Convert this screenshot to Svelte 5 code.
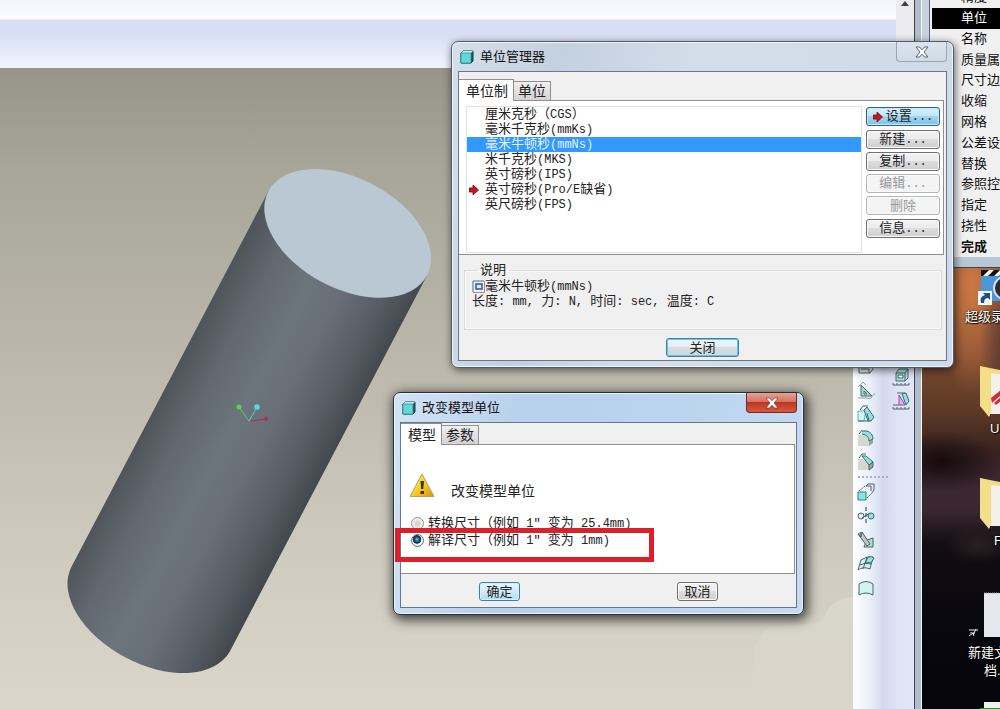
<script lang="ts">
  type Shape = { d: string; fill?: string; stroke?: string; dash?: string };
  type ToolIcon = { name: string; shapes: Shape[] };

  const INK = '#4a6468';
  const CYAN = '#8ce4e4';
  const PALE = '#d3f3f3';

  const unitSystems = [
    { name: '厘米克秒（CGS）' },
    { name: '毫米千克秒(mmKs)' },
    { name: '毫米牛顿秒(mmNs)' },
    { name: '米千克秒(MKS)' },
    { name: '英寸磅秒(IPS)' },
    { name: '英寸磅秒(Pro/E缺省)', current: true },
    { name: '英尺磅秒(FPS)' },
  ];

  const actions = [
    [{ label: '设置...', primary: true }],
    [
      { label: '新建...' },
      { label: '复制...' },
      { label: '编辑...', disabled: true },
      { label: '删除', disabled: true },
    ],
    [{ label: '信息...' }],
  ];

  const menuItems = [
    '精度', '单位', '名称', '质量属', '尺寸边', '收缩', '网格',
    '公差设', '替换', '参照控', '指定', '挠性', '完成',
  ];

  const modes = [
    { value: 'convert', label: '转换尺寸（例如 1" 变为 25.4mm)' },
    { value: 'interpret', label: '解译尺寸（例如 1" 变为 1mm)' },
  ];

  const shortcuts = [
    { kind: 'recorder', indent: 16, lines: [{ text: '超级录', indent: 3 }] },
    { kind: 'folder-red', indent: 18, lines: [{ text: 'U', indent: 28 }] },
    { kind: 'folder', indent: 18, lines: [{ text: 'F', indent: 32 }] },
    { kind: 'doc', indent: 6, lines: [{ text: '新建文', indent: 6 }, { text: '档.', indent: 22 }] },
    { kind: 'green', indent: 18, lines: [] },
  ];

  const editTools: ToolIcon[] = [
    {
      name: '壳',
      shapes: [
        { d: 'M2 10h10l4-4v6l-3 4H2z', fill: '#e3e6e6' },
        { d: 'M4 12h8v4' },
      ],
    },
    {
      name: '筋',
      shapes: [
        { d: 'M4 4v11h11z', fill: '#a9d8cb' },
        { d: 'M7 10v3h3z', fill: '#eef8f6' },
        { d: 'M1 6l5-5 3 3M1 17h9l3 1 5-6', stroke: '#8ba3a5' },
      ],
    },
    {
      name: '拔模',
      shapes: [
        { d: 'M1 6h8l-2 10H1z', fill: PALE, stroke: '#5cb5b5' },
        { d: 'M10 2l7 10-3 4h-3L7 5z', fill: CYAN },
        { d: 'M3 5l3-4h5M1 16h11l-2-8' },
      ],
    },
    {
      name: '倒圆角',
      shapes: [
        { d: 'M1 6h5q7 2 7 11H1z', fill: '#d4d8ce', stroke: 'none' },
        { d: 'M12 11l4-2v5l-4 3z', fill: '#9ca5a1', stroke: 'none' },
        { d: 'M5 2h5q6 2 6 8l-4 2q0-6-7-7', fill: CYAN },
        { d: 'M2 5l3-4' },
      ],
    },
    {
      name: '倒角',
      shapes: [
        { d: 'M1 6h5l6 6v5H1z', fill: '#d4d8ce', stroke: 'none' },
        { d: 'M12 12l4-3v5l-4 3z', fill: '#9ca5a1' },
        { d: 'M5 3h4l7 6-4 3z', fill: CYAN },
        { d: 'M2 5l3-4h4' },
      ],
    },
  ];

  const patternTools: ToolIcon[] = [
    {
      name: '阵列',
      shapes: [
        { d: 'M1 9h8v8H1z', fill: CYAN, stroke: '#2f7f84' },
        { d: 'M9 3l2-2h6v6l-2 3M9 3h5v5' },
        { d: 'M2 8l6-5M10 15l5-5', dash: '2 1' },
      ],
    },
    {
      name: '镜像',
      shapes: [
        { d: 'M1 9a3 3 0 1 0 6 0a3 3 0 1 0-6 0', fill: '#e3f8f8' },
        { d: 'M11 9a3 3 0 1 0 6 0a3 3 0 1 0-6 0', fill: CYAN },
        { d: 'M5 11l8-5' },
        { d: 'M9 0v18', dash: '4 2', stroke: '#25383a' },
      ],
    },
    {
      name: '合并',
      shapes: [
        { d: 'M5 2l5 7 6-2v9H7l2-5z', fill: '#a9dfd0' },
        { d: 'M1 3l4-2 8 12-3 2z', fill: '#c9c4c6' },
        { d: 'M1 3l3 3 1-5', fill: '#5fa8a0' },
      ],
    },
    {
      name: '边界混合',
      shapes: [
        { d: 'M4 5q5-4 12-3l-3 12q-7-3-12 1z', fill: PALE },
        { d: 'M11 2q4-1 6 1l-3 5q-3-1-6 0z', fill: CYAN },
        { d: 'M3 10q5-3 11-1M10 2L6 14' },
      ],
    },
    {
      name: '填充',
      shapes: [{ d: 'M2 5q7-5 14 0v11q-7-4-14 0z', fill: PALE }],
    },
  ];

  const featureTools: ToolIcon[] = [
    {
      name: '拉伸',
      shapes: [
        { d: 'M4 5l3-4h9v9l-3 3H4z', fill: '#a9dfdf' },
        { d: 'M4 5h9v8M13 5l3-4' },
        { d: 'M6 7h5v3H6z', fill: '#fff' },
        { d: 'M1 15v2h16v-2M5 15v2M9 15v2M13 15v2' },
      ],
    },
    {
      name: '旋转',
      shapes: [
        { d: 'M10 2l4-1 3 8-3 4z', fill: CYAN },
        { d: 'M7 3v10h6z', fill: '#dcb8ee', stroke: '#8b4aa5' },
        { d: 'M1 15v2h16v-2M1 13h6M5 1h8M5 15v2M9 15v2M13 15v2' },
      ],
    },
  ];

  let selected = $state(2);
  let mode = $state('interpret');

  const runs = (text: string) => text.match(/[\x20-\x7e]+|[^\x20-\x7e]+/g) ?? [];
  const isLatin = (run: string) => run.charCodeAt(0) < 0x7f;
</script>

{#snippet mixed(text: string)}
  <span class="mixed">{#each runs(text) as run}<span class:latin={isLatin(run)}>{run}</span>{/each}</span>
{/snippet}

{#snippet arrow()}
  <svg class="arrow" viewBox="0 0 10 10" aria-hidden="true">
    <path d="M0 3h4V0l5.500 5L4 10V7H0z" fill="#c8141e" stroke="#6d1010" stroke-width=".8" />
  </svg>
{/snippet}

{#snippet cube()}
  <svg class="cube" viewBox="0 0 14 14" aria-hidden="true">
    <path d="M1 3l2-2h10v10l-2 2H1z" fill="#255a60" stroke="#173e44" />
    <path d="M1 3l2-2h10l-2 2z" fill="#b5f3f0" />
    <rect x="1" y="3" width="10" height="10" fill="#62d9d8" stroke="#2b7378" stroke-width=".6" />
  </svg>
{/snippet}

{#snippet tools(list: ToolIcon[])}
  {#each list as tool (tool.name)}
    <button class="tool" aria-label={tool.name}>
      <svg viewBox="0 0 18 18">
        {#each tool.shapes as shape}
          <path
            d={shape.d}
            fill={shape.fill ?? 'none'}
            stroke={shape.stroke ?? INK}
            stroke-dasharray={shape.dash}
          />
        {/each}
      </svg>
    </button>
  {/each}
{/snippet}

<div class="screen">
  <main class="cad">
    <header class="ribbon">
      <div class="ribbon-bar"></div>
      <div class="scroll">
        <svg viewBox="0 0 8 5"><path d="M0 5l4-5 4 5z" fill="#3c4048" /></svg>
      </div>
    </header>

    <div class="work">
      <div class="canvas">
        <svg viewBox="0 68 853 641" preserveAspectRatio="xMinYMin slice" aria-hidden="true">
          <defs>
            <linearGradient id="side" gradientUnits="userSpaceOnUse" x1="71" y1="567" x2="230" y2="652">
              <stop offset="0" stop-color="#4f555b" />
              <stop offset=".2" stop-color="#626970" />
              <stop offset=".42" stop-color="#6c747c" />
              <stop offset=".6" stop-color="#686f77" />
              <stop offset=".82" stop-color="#565d64" />
              <stop offset="1" stop-color="#41474c" />
            </linearGradient>
            <linearGradient id="patch" x2="0" y2="1">
              <stop offset="0" stop-color="#dbd8cc" stop-opacity=".9" />
              <stop offset="1" stop-color="#dbd8cc" stop-opacity="0" />
            </linearGradient>
          </defs>
          <path
            d="M853 597q-22 1-30 22q-3 5-26 5l-28 4q-14 8-16 30v51h100z"
            fill="url(#patch)"
          />
          <path
            d="M268.400 191.300L71.100 567.500A89.800 55.100 28 0 0 229.700 651.700L427 275.500z"
            fill="url(#side)"
          />
          <ellipse cx="347.700" cy="233.400" rx="89.800" ry="55.100" transform="rotate(28 347.700 233.400)" fill="#b9c8d3" />
          <path d="M249 421l-10-14" stroke="#5fc765" />
          <path d="M249 421l8-14" stroke="#5fc9c4" />
          <path d="M251 421l15-2" stroke="#a8324a" />
          <circle cx="239" cy="407" r="2.500" fill="#55d848" />
          <circle cx="257" cy="407" r="2.800" fill="#4ddbe6" />
          <circle cx="266" cy="419" r="2" fill="#b92c40" />
        </svg>
      </div>

      <aside class="toolbars">
        <div class="toolbar">
          {@render tools(editTools)}
          <hr />
          {@render tools(patternTools)}
        </div>
        <div class="toolbar toolbar--features">
          {@render tools(featureTools)}
        </div>
      </aside>
    </div>
  </main>

  <section class="desktop">
    <nav class="menu">
      {#each menuItems as item, i (item)}
        <button class="menu-item" class:active={i === 1} class:strong={item === '完成'}>{item}</button>
      {/each}
    </nav>

    <div class="shortcuts">
      {#each shortcuts as { kind, indent, lines } (kind)}
        <div class="shortcut">
          <div class="shortcut-icon" style:padding-left="{indent}px">
            {#if kind === 'recorder'}
              <svg width="50" height="38" viewBox="0 0 50 38">
                <path d="M3 0h47v31H3z" fill="#4a97d8" />
                <path d="M3 0h47v6H3z" fill="#111" />
                <path d="M5 6l6-6h5l-6 6zM16 6l6-6h5l-6 6z" fill="#f4f4f4" />
                <circle cx="27" cy="18" r="12" fill="#d7dbe2" />
                <circle cx="27" cy="18" r="10" fill="#2a2b35" />
                <circle cx="27" cy="18" r="3" fill="#c33" />
                <path d="M0 21h14v14H0z" fill="#f5f8fb" />
                <path d="M3 33q-2-6 4-8l-2-2h7v7l-2-2q-4 0-4 5z" fill="#1d4f8f" />
              </svg>
            {:else if kind === 'folder' || kind === 'folder-red'}
              <svg width="50" height="54" viewBox="0 0 50 54">
                <path d="M8 6l42-2v44H8z" fill="#f3f1ea" />
                <path d="M0 0l20 4v4l-9-1v38l-2 6L0 40z" fill="#f1dc83" />
                <path d="M0 0l10 5v45L0 38z" fill="#f3df8a" />
                {#if kind === 'folder-red'}
                  <path d="M11 32l10-8v5l-9 8zM14 37l7-6v4l-5 4z" fill="#cf2f38" />
                {/if}
              </svg>
            {:else if kind === 'doc'}
              <svg width="66" height="54" viewBox="0 0 66 54">
                <path d="M16 3h50v44H16z" fill="#e6e8ef" />
                <path d="M16 3h50" stroke="#999" stroke-dasharray="1 1" />
                <path d="M1 40h9M2 43h5M1 46l4-3 1 3M8 39l-3 6" stroke="#e9e9e9" fill="none" />
              </svg>
            {:else}
              <svg width="50" height="54" viewBox="0 0 50 54">
                <path d="M4 0h46v54H4z" fill="#eef2ec" />
                <path d="M0 6h20v48H0z" fill="#3c8a2e" />
              </svg>
            {/if}
          </div>
          {#each lines as line}
            <span class="shortcut-label" style:padding-left="{line.indent}px">{line.text}</span>
          {/each}
        </div>
      {/each}
    </div>
  </section>

  <section class="dialog dialog--manager" aria-label="单位管理器">
    <header class="title">
      {@render cube()}
      <h2>单位管理器</h2>
      <button class="close" aria-label="关闭窗口">
        <svg viewBox="0 0 14 12">
          <path d="M1 1h3.500L7 3.800 9.500 1H13L9 6l4 5H9.500L7 8.200 4.500 11H1l4-5z" fill="#fff" stroke="#5a6270" />
        </svg>
      </button>
    </header>
    <div class="body">
      <div class="tabs" role="tablist">
        <button class="tab tab--active" role="tab" aria-selected="true">单位制</button>
        <button class="tab" role="tab" aria-selected="false">单位</button>
      </div>
      <div class="pane pane--systems">
        <ul class="systems" role="listbox" aria-label="单位制">
          {#each unitSystems as system, i (system.name)}
            <li role="option" aria-selected={i === selected}>
              <button class:selected={i === selected} onclick={() => (selected = i)}>
                <span class="marker">{#if system.current}{@render arrow()}{/if}</span>
                {@render mixed(system.name)}
              </button>
            </li>
          {/each}
        </ul>
        <div class="actions">
          {#each actions as group}
            <div class="group">
              {#each group as action (action.label)}
                <button class="push" class:push--primary={action.primary} disabled={action.disabled}>
                  {#if action.primary}{@render arrow()}{/if}
                  {@render mixed(action.label)}
                </button>
              {/each}
            </div>
          {/each}
        </div>
      </div>
      <fieldset class="description">
        <legend>说明</legend>
        <p>
          <svg class="glyph" viewBox="0 0 13 13">
            <path d="M1 12V1h11" fill="none" stroke="#44709b" />
            <path d="M1 12.500h11.500V1" fill="none" stroke="#c98080" />
            <path d="M4 4h6v5H4z" fill="#dfeaf6" stroke="#2d5a96" stroke-width="1.500" />
          </svg>{@render mixed('毫米牛顿秒(mmNs)')}
        </p>
        <p>{@render mixed('长度: mm, 力: N, 时间: sec, 温度: C')}</p>
      </fieldset>
      <div class="manager-footer">
        <button class="push push--default">关闭</button>
      </div>
    </div>
  </section>

  <section class="dialog dialog--change" aria-label="改变模型单位">
    <header class="title">
      {@render cube()}
      <h2>改变模型单位</h2>
      <button class="close close--red" aria-label="关闭窗口">
        <svg viewBox="0 0 14 12">
          <path d="M1 1h3.500L7 3.800 9.500 1H13L9 6l4 5H9.500L7 8.200 4.500 11H1l4-5z" fill="#fff" stroke="#7c3a38" stroke-width=".7" />
        </svg>
      </button>
    </header>
    <div class="body">
      <div class="tabs" role="tablist">
        <button class="tab tab--active" role="tab" aria-selected="true">模型</button>
        <button class="tab" role="tab" aria-selected="false">参数</button>
      </div>
      <div class="pane pane--model">
        <div class="notice">
          <svg viewBox="0 0 26 25" aria-hidden="true">
            <defs>
              <linearGradient id="warn" x2="1" y2="1">
                <stop offset="0" stop-color="#fff17a" />
                <stop offset=".5" stop-color="#f8cf2c" />
                <stop offset="1" stop-color="#d89212" />
              </linearGradient>
            </defs>
            <path d="M13 1l12 22.500H1z" fill="url(#warn)" stroke="#b9a25a" stroke-linejoin="round" />
            <path d="M11.500 8h3.500l-.8 8h-2z" fill="#3d3210" />
            <rect x="11.500" y="18" width="3.500" height="3" fill="#3d3210" />
          </svg>
          <span>改变模型单位</span>
        </div>
        {#each modes as option (option.value)}
          <label class="mode">
            <input type="radio" name="mode" value={option.value} bind:group={mode} />
            {@render mixed(option.label)}
          </label>
        {/each}
      </div>
      <div class="change-footer">
        <button class="push push--ok">确定</button>
        <button class="push">取消</button>
      </div>
    </div>
    <div class="highlight"></div>
  </section>
</div>

<style>
  :global(body) {
    overflow: hidden;
  }

  .screen {
    position: relative;
    display: flex;
    height: 100vh;
    overflow: hidden;
    font-family: 'Liberation Sans', 'Noto Sans CJK SC', sans-serif;
    font-size: 13px;
    color: #222;
  }

  .screen * {
    box-sizing: border-box;
  }

  button {
    padding: 0;
    border: 0;
    background: none;
    font: inherit;
    color: inherit;
  }

  svg {
    display: block;
    flex: none;
  }

  .mixed {
    white-space: pre;
  }

  .latin {
    font-family: 'Liberation Mono', monospace;
    font-size: 12px;
  }

  /* CAD window */
  .cad {
    flex: 1;
    min-width: 0;
    display: flex;
    flex-direction: column;
    border-right: 1px solid #f4f6f8;
    box-shadow: inset -6px 0 #b3bdc9, inset -7px 0 #3d4650;
    padding-right: 7px;
  }

  .ribbon {
    display: flex;
    height: 68px;
    flex: none;
  }

  .ribbon-bar {
    flex: 1;
    background: linear-gradient(#f1f4fc 0, #fdfdff 19px, #d8def4 20px, #d9dff5 36px, #edf1fd 62px, #f1f4fd 100%);
  }

  .scroll {
    width: 18px;
    background: #ececee;
  }

  .scroll svg {
    width: 8px;
    margin: 1px auto;
  }

  .work {
    flex: 1;
    min-height: 0;
    display: flex;
  }

  .canvas {
    flex: 1;
    min-width: 0;
    background: linear-gradient(#97958a, #a8a599 16%, #bdbaad 48%, #d0cdc0 78%, #dad7ca);
  }

  .canvas svg {
    width: 100%;
    height: 100%;
  }

  .toolbars {
    width: 61px;
    display: flex;
    justify-content: space-between;
    background: linear-gradient(90deg, #fdfeff, #e9effa 18px, #d5d9ef 30px, #e0e2f6 45px, #e3e5f9);
  }

  .toolbar {
    display: flex;
    flex-direction: column;
    align-items: flex-start;
    padding: 286px 0 0 4px;
  }

  .toolbar--features {
    padding: 297px 4px 0 0;
  }

  .toolbar hr {
    width: 32px;
    height: 6px;
    margin: 0;
    border: 0;
    background: radial-gradient(circle, #a9b1c6 1px, transparent 1px) 0 0 / 4px 6px;
  }

  .tool {
    height: 24px;
  }

  .tool svg {
    width: 18px;
    height: 18px;
  }

  /* Desktop with the menu panel above it */
  .desktop {
    width: 78px;
    display: flex;
    flex-direction: column;
    overflow: hidden;
    background:
      radial-gradient(ellipse 34px 18px at 56px 545px, #2c2022, transparent),
      radial-gradient(ellipse 26px 70px at 84px 345px, #5a3a34, transparent),
      radial-gradient(ellipse 40px 110px at 50px 285px, #cc7a45, transparent),
      radial-gradient(ellipse 60px 30px at 20px 462px, #140b0e, transparent),
      linear-gradient(#8a4e30 0 280px, #7d4a30 350px, #5d3a26 410px, #3a2320 450px, #3b2732 480px, #3a2730 510px, #120d12 545px, #07070d 640px, #06060c);
  }

  /* The list is scrolled up, so its first row is only partly in view */
  .menu {
    position: relative;
    flex: none;
    display: grid;
    grid-template-rows: repeat(13, 1fr);
    height: 281px;
    margin: -13px 0 0 -1px;
    padding: 0 0 10px 8px;
    border-left: 1px solid #4a545f;
    border-bottom: 1px solid #3c444e;
    background: #b9c6d6;
    box-shadow: inset 7px 0 #c9d3df, inset 8px 0 #59626e;
  }

  .menu-item {
    display: flex;
    align-items: center;
    min-height: 0;
    line-height: 20px;
    padding-left: 29px;
    border-left: 2px solid #f0f0f0;
    background: #f0f0f0;
    color: #111;
    white-space: nowrap;
  }

  .menu-item.active {
    background: #000;
    color: #fff;
  }

  .menu-item.strong {
    font-weight: 700;
  }

  .shortcuts {
    flex: 1;
    min-height: 0;
    overflow: hidden;
    display: grid;
    grid-auto-rows: 112px;
    margin-top: -14px;
    padding-left: 40px;
  }

  .shortcut {
    display: flex;
    flex-direction: column;
    color: #fff;
  }

  .shortcut-icon {
    display: flex;
    align-items: flex-end;
    height: 54px;
  }

  .shortcut-label {
    line-height: 18px;
    white-space: nowrap;
    text-shadow: 1px 1px 1px #000, 0 0 2px #000;
  }

  /* Dialogs */
  .dialog {
    position: absolute;
    padding: 0 6px 6px;
    border: 1px solid #4f5c6b;
    border-radius: 7px;
    background: linear-gradient(100deg, #d4dfeb, #c3d0df 20%, #d3deea 45%, #cfdae7);
    box-shadow: inset 0 0 0 1px #eef4fa, 1px 2px 8px rgba(0, 0, 0, 0.6);
  }

  .dialog--manager {
    left: 451px;
    top: 41px;
    width: 503px;
  }

  .dialog--change {
    left: 393px;
    top: 392px;
    width: 411px;
    border-color: #262e36;
    background: linear-gradient(100deg, #d3e3f4, #b7d0ec 30%, #bad3ee 60%, #c4daf1);
    box-shadow: inset 0 0 0 1px #eaf4fd, 2px 3px 12px 2px rgba(0, 0, 0, 0.7);
  }

  .title {
    display: flex;
    align-items: center;
    height: 29px;
    padding-left: 2px;
  }

  .title h2 {
    margin: 0 auto 0 6px;
    font-size: 13px;
    font-weight: 400;
    line-height: 20px;
    color: #111;
  }

  .cube {
    width: 14px;
    height: 14px;
  }

  .close {
    align-self: flex-start;
    display: grid;
    place-items: center;
    width: 51px;
    height: 20px;
    border: 1px solid #98a5b6;
    border-top: 0;
    border-radius: 0 0 4px 4px;
    background: linear-gradient(#dce5ee, #d0dae6);
  }

  .close svg {
    width: 14px;
    height: 12px;
  }

  .close--red {
    border-color: #6d2a28;
    background: linear-gradient(#e5a193, #d2715f 48%, #bc3522 50%, #d9593d);
  }

  .body {
    border: 1px solid #66788a;
    background: #f0f0f0;
  }

  .dialog--manager .body {
    padding-top: 7px;
  }

  .tabs {
    position: relative;
    display: flex;
    align-items: flex-end;
    height: 22px;
    margin-bottom: -1px;
  }

  .tab {
    height: 20px;
    padding: 0 4px;
    border: 1px solid #8e8f91;
    border-left: 0;
    background: linear-gradient(#f0f0f0, #d3d3d3);
    font-size: 14px;
    line-height: 18px;
  }

  .tab--active {
    height: 22px;
    padding: 0 5px 0 7px;
    border-bottom: 0;
    background: #fff;
  }

  .pane {
    border: 1px solid #8e8f91;
    border-left: 0;
    background: #fff;
  }

  .pane--systems {
    display: flex;
    gap: 4px;
    margin-right: 2px;
    padding: 5px 3px 1px 7px;
  }

  .systems {
    flex: 1;
    min-height: 147px;
    margin: 0;
    padding: 0;
    border: 1px solid #e2e2e2;
    list-style: none;
  }

  .systems button {
    display: flex;
    align-items: center;
    width: 100%;
    height: 15px;
    line-height: 15px;
  }

  .systems .selected {
    background: #3399ff;
    color: #e2f0ff;
  }

  .marker {
    width: 18px;
    padding-left: 2px;
  }

  .arrow {
    width: 10px;
    height: 10px;
  }

  .actions {
    width: 74px;
    display: flex;
    flex-direction: column;
    gap: 4px;
    padding-top: 1px;
  }

  .group {
    display: grid;
    gap: 3px;
  }

  .push {
    display: flex;
    align-items: center;
    justify-content: center;
    gap: 3px;
    height: 19px;
    border: 1px solid #707070;
    border-radius: 3px;
    background: linear-gradient(#f2f2f2, #ebebeb 49%, #dddddd 50%, #cfcfcf);
    box-shadow: inset 0 0 0 1px #fafafa;
    line-height: 17px;
  }

  .push--primary {
    border-color: #2c628b;
    background: linear-gradient(#d9f0fc, #bee6fd 49%, #a0d5f2 50%, #80c1e6);
    box-shadow: inset 0 0 0 1px #c5e8f8;
  }

  .push--default,
  .push--ok {
    border-color: #3c7fb1;
    background: linear-gradient(#f0f6f8, #e4eef2 49%, #d3dde2 50%, #cdd8dc);
    box-shadow: inset 0 0 0 1px #62c6de;
  }

  .push--ok {
    background: linear-gradient(#eaf6fd, #d0ebf8 50%, #b5dcf0);
    box-shadow: inset 0 0 0 1px #d5f0fa;
  }

  .push:disabled {
    border-color: #b5b5b5;
    background: #f4f4f4;
    color: #9a9a9a;
  }

  .description {
    min-width: 0;
    margin: 6px 4px 0 5px;
    padding: 0 7px 20px;
    border: 1px solid #dcdcdc;
    box-shadow: inset 0 0 0 1px #f8f8f8;
  }

  .description legend {
    margin-left: 5px;
    padding: 0 3px;
    line-height: 18px;
  }

  .description p {
    display: flex;
    align-items: center;
    margin: 0;
    height: 15px;
    line-height: 15px;
  }

  .glyph {
    width: 13px;
    height: 13px;
  }

  .manager-footer {
    display: flex;
    justify-content: center;
    padding: 8px 0 3px;
  }

  .manager-footer .push {
    width: 73px;
  }

  .pane--model {
    margin-right: 1px;
    padding: 28px 0 24px 8px;
  }

  .notice {
    display: flex;
    align-items: flex-end;
    gap: 16px;
    margin-bottom: 17px;
    font-size: 14px;
    line-height: 14px;
  }

  .notice svg {
    width: 26px;
    height: 25px;
  }

  .mode {
    display: flex;
    align-items: center;
    gap: 4px;
    height: 17px;
    padding-left: 2px;
    line-height: 17px;
  }

  .mode input {
    appearance: none;
    width: 13px;
    height: 13px;
    margin: 0;
    border: 1px solid #8e8f8f;
    border-radius: 50%;
    background: radial-gradient(circle, #d5d5d5 20%, #f4f4f4 70%);
  }

  .mode input:checked {
    border-color: #5c7080;
    background: radial-gradient(circle at 45% 40%, #7fd0ee 0, #164a6a 28%, #10354f 44%, #f4f4f4 52%);
  }

  .change-footer {
    display: flex;
    justify-content: space-between;
    padding: 8px 78px 6px;
  }

  .change-footer .push {
    width: 41px;
  }

  .highlight {
    position: absolute;
    left: 1px;
    top: 135px;
    width: 259px;
    height: 34px;
    border: 5px solid #db2029;
    pointer-events: none;
  }
</style>
